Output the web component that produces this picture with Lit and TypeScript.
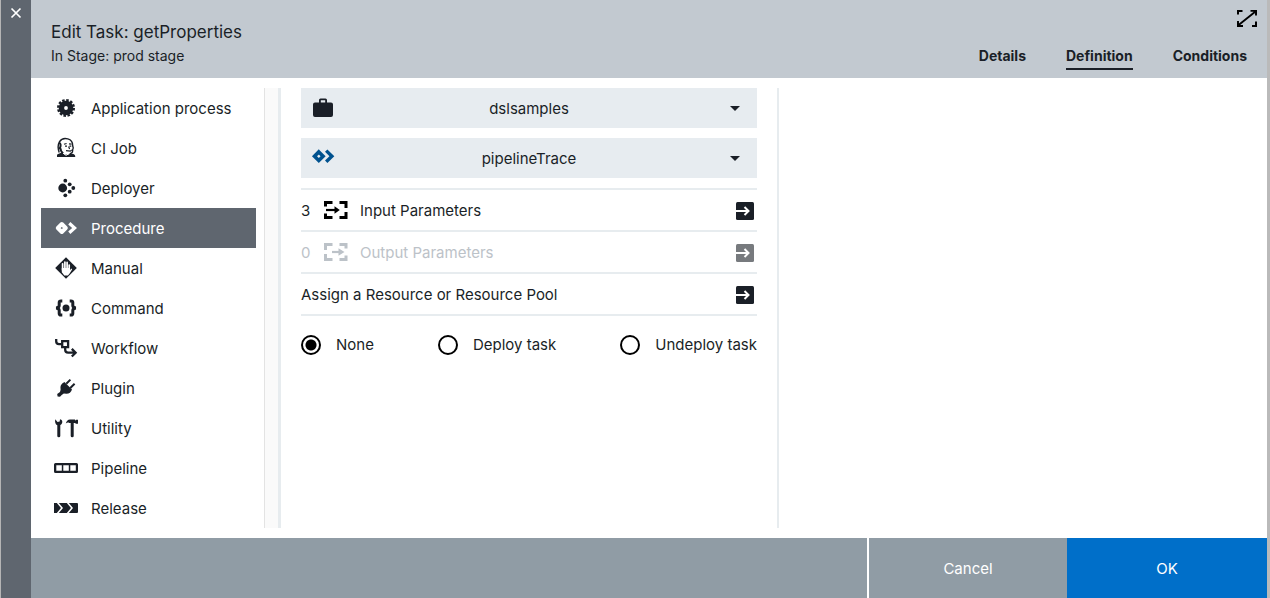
import { LitElement, html, css, svg, TemplateResult } from "lit";
import { customElement, property, state } from "lit/decorators.js";
import { classMap } from "lit/directives/class-map.js";

const icons: Record<string, TemplateResult> = {
  gear: svg`
    <circle cx="12" cy="12" r="4.600" fill="none" stroke="currentColor" stroke-width="5.400"/>
    <circle cx="12" cy="12" r="7.800" fill="none" stroke="currentColor" stroke-width="2.400" stroke-dasharray="2.500 1.584"/>`,
  butler: svg`
    <path d="M5.200 16.500C4 13 3.600 9 5.400 5.800 7.200 3 10.500 2 13.800 2.900c3.400.9 5 3.700 4.900 7 .7 1.600 1 2.600.1 3.400l-.4 2.900-2.600 1.900" fill="#fff" stroke="currentColor" stroke-width="1.400"/>
    <path d="M5.200 6.500C7.500 8 6.800 10 6 12l-1.400.5M7 12.300c-1 2 .3 3.500 2.200 5" fill="none" stroke="currentColor" stroke-width="2"/>
    <path d="M10 8.300l2.600-.8M15 7.800l2.600.4M11 10.100h2M15.500 10.100h1.800M14.600 10.500l1 2.500M12 14.600l4.300.5 1.500-1.200" fill="none" stroke="currentColor" stroke-width="1.200"/>
    <path d="M3 21v-2.200c1.400-1.300 3.200-1.700 4.700-2.300l3 2 4.300-.2 2-.8c2.300.4 4 1.100 4.200 2.500V21Z" fill="currentColor"/>
    <path d="M9 17l3 2.300 3-1.600" fill="none" stroke="#fff" stroke-width="1"/>`,
  deployer: svg`
    <g fill="currentColor"><circle cx="8.700" cy="12" r="4.400"/><circle cx="11.300" cy="4.700" r="1.900"/>
    <circle cx="11.300" cy="19.300" r="1.900"/><circle cx="15.700" cy="8.300" r="1.900"/>
    <circle cx="15.700" cy="15.700" r="1.900"/><circle cx="19.300" cy="12" r="1.900"/></g>`,
  procedure: svg`
    <path d="M7.800 8 11.800 12 7.800 16 3.800 12Z" fill="none" stroke="currentColor" stroke-width="4" stroke-linejoin="round"/>
    <path d="M15.300 7.200 20.600 12l-5.300 4.800" fill="none" stroke="currentColor" stroke-width="3.200"/>`,
  procedureLarge: svg`
    <path d="M7.800 5.900 12.100 10.200 7.800 14.500 3.500 10.200Z" fill="none" stroke="currentColor" stroke-width="3.600"/>
    <path d="M15.200 4.600 20.900 10.200l-5.700 5.600" fill="none" stroke="currentColor" stroke-width="3.400"/>`,
  hand: svg`
    <path d="M12 1.200 22.800 12 12 22.800 1.200 12Z" fill="currentColor"/>
    <path d="M8.600 14V7.800M10.900 13V6M13.100 13V6.400M15.200 14V9" stroke="#fff" stroke-width="1.700" stroke-linecap="round"/>
    <path d="M7.800 12h8.200v2.200l1.200-1.600 1 .6-2.400 4-1.900 2.300H10.300L7.800 16.300Z" fill="#fff"/>`,
  braces: svg`
    <circle cx="12" cy="12" r="3.500" fill="currentColor"/>
    <path d="M8.300 4.900H7Q5.200 4.900 5.200 6.500v3Q5.200 11.500 2.200 12q3 .5 3 2.500v3q0 1.600 1.800 1.600h1.300M15.700 4.900H17q1.800 0 1.800 1.600v3q0 2 3 2.500-3 .5-3 2.500v3q0 1.600-1.800 1.600h-1.300" fill="none" stroke="currentColor" stroke-width="3"/>`,
  workflow: svg`
    <path d="M2.200 3v2.300Q2.200 8.200 5 8.200h2.500M8.200 5.200h5.900v5.900H8.200ZM11.200 11.500v2.300q0 2.900 2.900 2.900h7M17.800 12.900l3.800 3.800-3.800 3.800" fill="none" stroke="currentColor" stroke-width="2.300"/>`,
  plug: svg`
    <path d="M10.400 6 18 13.600Q16.600 17.800 12.500 17.800L9.800 17.500 7.700 19 6 20.800 3.600 20.400 3.200 18 6 16 6.600 13.800Q5.300 8.800 10.400 6Z" fill="currentColor"/>
    <path d="M12.300 7.700 16.400 3.600M16.300 12 20.600 7.800" stroke="currentColor" stroke-width="2"/>`,
  tools: svg`
    <path d="M1.300 3.200 3.500 6l2.200-.4L6 3.200C8 3.500 8.600 5 8.200 6.700 7.900 8 7 8.700 6.300 9v11q0 1.200-1.500 1.200T3.300 20V9.200C1.500 8.500.6 6 1.300 3.200Z" fill="currentColor"/>
    <path d="M11.800 7.600C12.300 5 13.800 3.500 16 3.400h5v1.300l1-.9h2v4h-2l-1-.9h-1.300V20q0 1.200-1.500 1.200T16.700 20V6.900h-1.400C14 6.300 12.800 6.700 11.800 7.600Z" fill="currentColor"/>`,
  pipeline: svg`
    <path fill-rule="evenodd" d="M1.500 7h21Q24 7 24 8.500v7q0 1.500-1.500 1.500h-21Q0 17 0 15.500v-7Q0 7 1.500 7ZM2.300 9.300v5.400h5.500V9.300ZM9.300 9.300v5.400h5.500V9.300ZM16.300 9.300v5.400h5.500V9.300Z" fill="currentColor"/>`,
  release: svg`
    <path d="M0 7h2.800l4.200 5-4.200 5H0ZM4.800 7h8l4.200 5-4.200 5h-8l4.200-5ZM14.800 7H23q1 0 1 1v8q0 1-1 1h-8.200l4.200-5Z" fill="currentColor"/>`,
  briefcase: svg`
    <path fill-rule="evenodd" d="M4 6.500h4V4q0-1.500 1.500-1.500h5Q16 2.500 16 4v2.500h4q2 0 2 2V19q0 2-2 2H4q-2 0-2-2V8.500q0-2 2-2ZM9.800 6.500h4.400V4.300H9.800Z" fill="currentColor"/>`,
  input: svg`
    <path d="M8.500 4.500H1.500V8.500M1.500 15.500v4h7M15.500 4.500h6.500V10M22 14v5.500h-6.500" fill="none" stroke="currentColor" stroke-width="3"/>
    <path d="M2 12h10" stroke="currentColor" stroke-width="2.200"/><path d="M10.500 8.200 15.800 12l-5.300 3.800Z" fill="currentColor"/>`,
  output: svg`
    <path d="M8.500 4.500H1.500V10M1.500 14v5.500h7M15.500 4.500h6.500V8.500M22 15.500v4h-6.500" fill="none" stroke="currentColor" stroke-width="3"/>
    <path d="M8 12h8" stroke="currentColor" stroke-width="2.200"/><path d="M14.500 8.200 20.500 12l-6 3.800Z" fill="currentColor"/>`,
  open: svg`
    <rect x="3" y="4" width="18" height="18" rx="1.500" fill="currentColor"/>
    <path d="M3 13h12.500M11.500 9 15.500 13l-4 4" fill="none" stroke="#fff" stroke-width="2"/>`,
  expand: svg`
    <path d="M3 8.500V4.900h4.500M17 20h4v-4.500" fill="none" stroke="currentColor" stroke-width="2"/>
    <path d="M3 19.500 20.500 5.500M15.500 4.900H21V9.500M3 15V20h5" fill="none" stroke="currentColor" stroke-width="1.900"/>
    <path d="M17.500 4H22v4.500ZM2 16.500V21h4.500Z" fill="currentColor"/>`,
  close: svg`<path d="M7.500 8.500l9 9M16.500 8.500l-9 9" stroke="currentColor" stroke-width="1.700"/>`,
};

@customElement("task-icon")
export class TaskIcon extends LitElement {
  static styles = css`
    :host { display: inline-flex; width: 24px; height: 24px; flex: none; }
    .glyph { display: block; width: 100%; height: 100%; }
  `;
  @property() name = "";
  render() {
    return html`<svg class="glyph" viewBox="0 0 24 24" aria-hidden="true">${icons[this.name]}</svg>`;
  }
}

@customElement("app-root")
export class AppRoot extends LitElement {
  static styles = css`
    :host { display: block; font-family: Inter, "Liberation Sans", sans-serif; font-size: 15px; line-height: 21px; color: #1a1f27; }
    * { box-sizing: border-box; }
    button, select { font: inherit; color: inherit; border: 0; margin: 0; padding: 0; background: none; cursor: pointer; }
    .page { display: flex; min-height: 100vh; background: #fff; border-left: 1px solid #b5b5b5; border-right: 3px solid #bababa; }
    .rail { flex: none; width: 30px; background: #5f666f; color: #fff; }
    .close { display: flex; justify-content: center; width: 100%; }
    .panel { flex: 1; min-width: 0; display: flex; flex-direction: column; }
    .header { display: flex; justify-content: space-between; height: 78px; padding: 0 20px; background: #c2c9d0; }
    .titles { padding-top: 20px; }
    .title { margin: 0; font-size: 17px; line-height: 24px; font-weight: 400; }
    .subtitle { margin: 0; font-size: 14px; line-height: 24px; }
    .tools { display: flex; flex-direction: column; align-items: flex-end; justify-content: space-between; }
    .expand { display: flex; padding-top: 6px; margin-right: -12px; color: #000; }
    .tabs { display: flex; gap: 40px; padding-bottom: 8px; }
    .tab { height: 24px; font-size: 14px; line-height: 20px; font-weight: 700; color: inherit; text-decoration: none; border-bottom: 2px solid transparent; }
    .tab.current { border-color: #1a1f27; }
    .body { flex: 1; display: flex; padding: 10px 0; }
    .types { flex: none; width: 233px; padding: 0 8px 0 10px; }
    .type { display: flex; align-items: center; gap: 13px; width: 100%; height: 40px; padding: 0 13px; text-align: left; }
    .type.current { background: #5f666f; color: #fff; }
    .gutter { flex: none; width: 17px; background: #fafafa; border-left: 1px solid #e3e3e3; border-right: 3px solid #e7ecef; }
    .definition { flex: 0 1 498px; padding: 0 20px; border-right: 2px solid #e7ecef; }
    .picker { display: grid; align-items: center; height: 40px; margin-bottom: 10px; background: #e7ecf0; }
    .picker > * { grid-area: 1 / 1; }
    .picker task-icon { margin-left: 10px; pointer-events: none; z-index: 1; }
    .picker .blue { color: #00528f; }
    .select { appearance: none; width: 100%; height: 40px; padding: 0 40px; text-align: center; text-align-last: center; }
    .caret { justify-self: end; margin-right: 17px; border: 5px solid transparent; border-top-color: #1a1f27; border-bottom: 0; pointer-events: none; z-index: 1; }
    .rows { margin: 0; padding: 0; list-style: none; border-top: 2px solid #e7ecef; }
    .row { display: flex; align-items: center; height: 42px; border-bottom: 2px solid #e7ecef; }
    .count { width: 23px; }
    .param { margin-right: 12px; color: #000; }
    .row.off { color: #bcc2c8; }
    .row.off .param { color: #bcc2c8; }
    .open { display: flex; margin-left: auto; color: #1a1f27; }
    .open:disabled { color: #777a7e; cursor: default; }
    .choices { display: flex; justify-content: space-between; margin: 0; padding: 18px 0; border: 0; }
    .choice { display: flex; align-items: center; gap: 15px; }
    .radio { appearance: none; width: 20px; height: 20px; margin: 0; border: 2px solid #000; border-radius: 50%; background: #fff; }
    .radio:checked { background: radial-gradient(circle, #000 5px, #fff 6px); }
    .footer { display: flex; justify-content: flex-end; height: 60px; background: #909ca5; color: #fff; }
    .action { width: 200px; }
    .cancel { border-left: 2px solid #fff; }
    .ok { background: #006fc9; }
  `;

  @state() private type = "Procedure";
  @state() private mode = "None";

  private types = [
    ["gear", "Application process"], ["butler", "CI Job"], ["deployer", "Deployer"], ["procedure", "Procedure"],
    ["hand", "Manual"], ["braces", "Command"], ["workflow", "Workflow"], ["plug", "Plugin"],
    ["tools", "Utility"], ["pipeline", "Pipeline"], ["release", "Release"],
  ];

  render() {
    return html`
      <div class="page">
        <div class="rail"><button class="close" aria-label="Close"><task-icon name="close"></task-icon></button></div>
        <div class="panel">
          <header class="header">
            <div class="titles">
              <h1 class="title">Edit Task: getProperties</h1>
              <p class="subtitle">In Stage: prod stage</p>
            </div>
            <div class="tools">
              <button class="expand" aria-label="Expand"><task-icon name="expand"></task-icon></button>
              <nav class="tabs">
                <a class="tab" href="#details">Details</a>
                <a class="tab current" href="#definition" aria-current="page">Definition</a>
                <a class="tab" href="#conditions">Conditions</a>
              </nav>
            </div>
          </header>
          <main class="body">
            <nav class="types" aria-label="Task type">
              ${this.types.map(([icon, label]) => html`
                <button class=${classMap({ type: true, current: label === this.type })} @click=${() => (this.type = label)}>
                  <task-icon name=${icon}></task-icon>${label}
                </button>`)}
            </nav>
            <div class="gutter"></div>
            <section class="definition">
              <div class="picker">
                <select class="select" aria-label="Project"><option>dslsamples</option></select>
                <task-icon name="briefcase"></task-icon><span class="caret"></span>
              </div>
              <div class="picker">
                <select class="select" aria-label="Procedure"><option>pipelineTrace</option></select>
                <task-icon class="blue" name="procedureLarge"></task-icon><span class="caret"></span>
              </div>
              <ul class="rows">
                <li class="row"><span class="count">3</span><task-icon class="param" name="input"></task-icon>Input Parameters
                  <button class="open" aria-label="Open input parameters"><task-icon name="open"></task-icon></button></li>
                <li class="row off"><span class="count">0</span><task-icon class="param" name="output"></task-icon>Output Parameters
                  <button class="open" disabled aria-label="Open output parameters"><task-icon name="open"></task-icon></button></li>
                <li class="row">Assign a Resource or Resource Pool
                  <button class="open" aria-label="Assign a resource"><task-icon name="open"></task-icon></button></li>
              </ul>
              <fieldset class="choices" aria-label="Task mode">
                ${["None", "Deploy task", "Undeploy task"].map((m) => html`
                  <label class="choice"><input class="radio" type="radio" name="mode" .checked=${m === this.mode}
                    @change=${() => (this.mode = m)} />${m}</label>`)}
              </fieldset>
            </section>
          </main>
          <footer class="footer">
            <button class="action cancel">Cancel</button>
            <button class="action ok">OK</button>
          </footer>
        </div>
      </div>`;
  }
}
